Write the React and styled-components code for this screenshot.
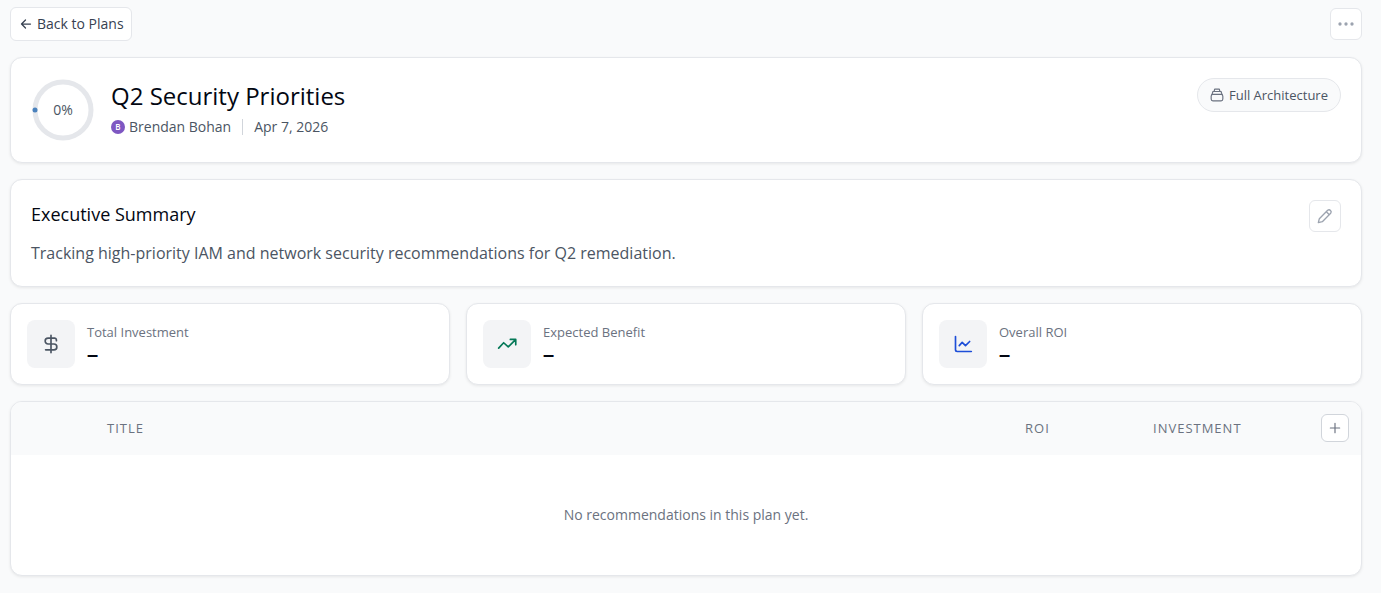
import React from 'react';
import styled, { createGlobalStyle, ThemeProvider } from 'styled-components';

const theme = {
  white: '#ffffff',
  page: '#f9fafb',
  tile: '#f3f4f6',
  border: '#e5e7eb',
  borderStrong: '#d1d5db',
  primary: '#030712',
  text: '#374151',
  secondary: '#4b5563',
  muted: '#6b7280',
  faint: '#9ca3af',
  radius: '12px',
  shadow: '0 1px 3px rgba(0, 0, 0, 0.08)',
};

const GlobalStyle = createGlobalStyle`
  *, *::before, *::after {
    box-sizing: border-box;
  }

  body {
    margin: 0;
    background: #f9fafb;
    font-family: 'Open Sans', 'Liberation Sans', sans-serif;
    font-size: 14px;
    line-height: 20px;
  }

  button {
    font: inherit;
    cursor: pointer;
  }
`;

const Page = styled.main`
  display: flex;
  flex-direction: column;
  gap: 16px;
  padding: 7px 19px 16px 10px;
`;

const Toolbar = styled.header`
  display: flex;
  align-items: center;
  justify-content: space-between;
`;

const BackButton = styled.button`
  display: flex;
  align-items: center;
  gap: 5px;
  height: 34px;
  padding: 0 7px 0 9px;
  border: 1px solid ${({ theme }) => theme.border};
  border-radius: 6px;
  background: ${({ theme }) => theme.white};
  color: ${({ theme }) => theme.text};
`;

const IconButton = styled.button`
  display: flex;
  flex-shrink: 0;
  align-items: center;
  justify-content: center;
  width: ${({ $small }) => ($small ? '28px' : '32px')};
  height: ${({ $small }) => ($small ? '28px' : '32px')};
  padding: 0;
  border: 1px solid
    ${({ theme, $small }) => ($small ? theme.borderStrong : theme.border)};
  border-radius: 6px;
  background: ${({ theme }) => theme.white};
  color: ${({ theme, $small }) => ($small ? theme.muted : theme.faint)};
`;

const Card = styled.section`
  border: 1px solid ${({ theme }) => theme.border};
  border-radius: ${({ theme }) => theme.radius};
  background: ${({ theme }) => theme.white};
  box-shadow: ${({ theme }) => theme.shadow};
`;

const PlanCard = styled(Card)`
  display: flex;
  align-items: flex-start;
  justify-content: space-between;
  padding: 20px;
`;

const PlanInfo = styled.div`
  display: flex;
  align-items: center;
  gap: 16px;
`;

const Progress = styled.svg`
  display: block;
  flex-shrink: 0;
  font-size: 14px;
  font-weight: 500;
`;

const PlanTitle = styled.h1`
  margin: 0;
  color: ${({ theme }) => theme.primary};
  font-size: 24px;
  font-weight: 400;
  line-height: 32px;
`;

const Meta = styled.div`
  display: flex;
  align-items: center;
  padding: 5px 0 3px;
  color: ${({ theme }) => theme.secondary};
`;

const Avatar = styled.span`
  width: 14px;
  height: 14px;
  margin-right: 4px;
  border-radius: 50%;
  background: #7e57c2;
  color: ${({ theme }) => theme.white};
  font-size: 8px;
  font-weight: 600;
  line-height: 14px;
  text-align: center;
`;

const Divider = styled.span`
  width: 1px;
  height: 16px;
  margin: 0 11px;
  background: ${({ theme }) => theme.borderStrong};
`;

const Badge = styled.span`
  display: flex;
  align-items: center;
  gap: 5px;
  height: 34px;
  padding: 0 12px;
  border: 1px solid ${({ theme }) => theme.border};
  border-radius: 17px;
  background: ${({ theme }) => theme.page};
  color: ${({ theme }) => theme.secondary};
  font-size: 13px;

  svg {
    color: ${({ theme }) => theme.muted};
  }
`;

const SummaryCard = styled(Card)`
  display: flex;
  align-items: flex-start;
  justify-content: space-between;
  padding: 20px;
`;

const SummaryTitle = styled.h2`
  margin: 0;
  color: ${({ theme }) => theme.primary};
  font-size: 18px;
  font-weight: 400;
  line-height: 28px;
`;

const SummaryText = styled.p`
  margin: 12px 0 0;
  color: ${({ theme }) => theme.secondary};
  font-size: 16px;
  line-height: 26px;
`;

const Stats = styled.div`
  display: grid;
  grid-template-columns: repeat(3, 1fr);
  gap: 16px;
`;

const StatCard = styled(Card)`
  display: flex;
  align-items: center;
  gap: 12px;
  padding: 16px;
`;

const StatIcon = styled.span`
  display: flex;
  align-items: center;
  justify-content: center;
  width: 48px;
  height: 48px;
  border-radius: 8px;
  background: ${({ theme }) => theme.tile};
  color: ${({ $color }) => $color};
`;

const StatLabel = styled.div`
  color: ${({ theme }) => theme.muted};
  font-size: 13px;
`;

const StatValue = styled.div`
  color: ${({ theme }) => theme.primary};
  font-family: 'Liberation Sans', sans-serif;
  font-size: 20px;
  font-weight: 600;
  line-height: 24px;
`;

const TableCard = styled(Card)`
  overflow: hidden;
`;

const Table = styled.table`
  width: 100%;
  border-spacing: 0;
  table-layout: fixed;
`;

const HeadCell = styled.th`
  width: ${({ $width }) => $width};
  height: 53px;
  padding: 0 12px 0 0;
  border-bottom: 1px solid ${({ theme }) => theme.page};
  background: ${({ theme }) => theme.page};
  color: ${({ theme }) => theme.muted};
  font-size: 13px;
  font-weight: 400;
  letter-spacing: 1px;
  text-align: left;
  text-transform: uppercase;

  ${IconButton} {
    margin-left: auto;
  }
`;

const EmptyCell = styled.td`
  height: 120px;
  padding: 0;
  color: ${({ theme }) => theme.muted};
  text-align: center;
`;

const Icon = ({ size = 16, stroke = 2, children }) => (
  <svg
    width={size}
    height={size}
    viewBox="0 0 24 24"
    fill="none"
    stroke="currentColor"
    strokeWidth={stroke}
    strokeLinecap="round"
    strokeLinejoin="round"
    aria-hidden="true"
  >
    {children}
  </svg>
);

const stats = [
  {
    label: 'Total Investment',
    color: '#4b5563',
    icon: (
      <path d="M18.500 8V7A2.200 2.200 0 0 0 16.500 5H8.500a3.500 3.500 0 0 0 0 7h7a3.500 3.500 0 0 1 0 7H5.500M12 1.500v21" />
    ),
  },
  {
    label: 'Expected Benefit',
    color: '#047857',
    icon: <path d="M2 17l6-6.500 5.500 5L22 7M16 6.500h6.500V13" />,
  },
  {
    label: 'Overall ROI',
    color: '#1d4ed8',
    icon: <path d="M3 3v16a2 2 0 0 0 2 2h17M7.500 14l3.500-4 4 4 5-5" />,
  },
];

const App = () => (
  <ThemeProvider theme={theme}>
    <GlobalStyle />
    <Page>
      <Toolbar>
        <BackButton type="button">
          <Icon size={12} stroke={2.5}>
            <path d="M21 12H3M11 4l-8 8 8 8" />
          </Icon>
          Back to Plans
        </BackButton>
        <IconButton type="button" aria-label="More actions">
          <Icon>
            <path d="M3 12h.01M12 12h.01M21 12h.01" strokeWidth="5" />
          </Icon>
        </IconButton>
      </Toolbar>

      <PlanCard>
        <PlanInfo>
          <Progress width="64" height="64" viewBox="0 0 64 64">
            <circle cx="32" cy="32" r="28" fill="none" stroke="#e5e7eb" strokeWidth="5" />
            <circle cx="4" cy="32" r="2.500" fill="#4a82bd" />
            <text x="32" y="37" textAnchor="middle" fill="#4b5563">
              0%
            </text>
          </Progress>
          <div>
            <PlanTitle>Q2 Security Priorities</PlanTitle>
            <Meta>
              <Avatar>B</Avatar>
              Brendan Bohan
              <Divider />
              Apr 7, 2026
            </Meta>
          </div>
        </PlanInfo>
        <Badge>
          <Icon size={14}>
            <rect x="2" y="11" width="20" height="11" rx="3" />
            <path d="M3.500 11l1.500-5h14l1.500 5M7 6l1-4h8l1 4" />
          </Icon>
          Full Architecture
        </Badge>
      </PlanCard>

      <SummaryCard>
        <div>
          <SummaryTitle>Executive Summary</SummaryTitle>
          <SummaryText>
            Tracking high-priority IAM and network security recommendations for Q2 remediation.
          </SummaryText>
        </div>
        <IconButton type="button" aria-label="Edit summary">
          <Icon>
            <path d="M2 22l1.500-6L16 3.500a3.200 3.200 0 0 1 4.500 4.500L8 20.500zM14 5.500l4.500 4.500" />
          </Icon>
        </IconButton>
      </SummaryCard>

      <Stats>
        {stats.map(({ label, color, icon }) => (
          <StatCard key={label}>
            <StatIcon $color={color}>
              <Icon size={20}>{icon}</Icon>
            </StatIcon>
            <div>
              <StatLabel>{label}</StatLabel>
              <StatValue>–</StatValue>
            </div>
          </StatCard>
        ))}
      </Stats>

      <TableCard>
        <Table>
          <thead>
            <tr>
              <HeadCell $width="96px" aria-label="Order" />
              <HeadCell>Title</HeadCell>
              <HeadCell $width="128px">ROI</HeadCell>
              <HeadCell $width="128px">Investment</HeadCell>
              <HeadCell $width="80px">
                <IconButton type="button" $small aria-label="Add recommendation">
                  <Icon size={14}>
                    <path d="M12 4v16M4 12h16" />
                  </Icon>
                </IconButton>
              </HeadCell>
            </tr>
          </thead>
          <tbody>
            <tr>
              <EmptyCell colSpan={5}>No recommendations in this plan yet.</EmptyCell>
            </tr>
          </tbody>
        </Table>
      </TableCard>
    </Page>
  </ThemeProvider>
);

export default App;
